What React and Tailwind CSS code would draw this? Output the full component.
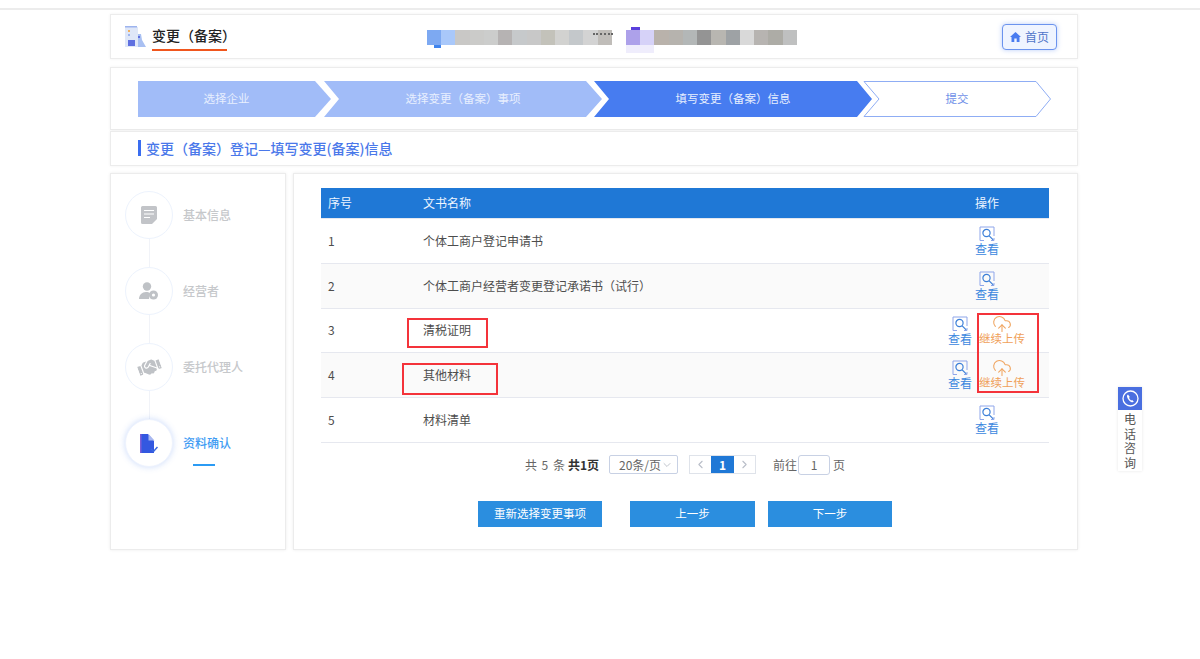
import React from "react";
import { FaHandshake } from "react-icons/fa";
import { ChevronDown, ChevronLeft, ChevronRight, CloudUpload } from "lucide-react";

const font = { fontFamily: '"Noto Sans CJK SC", "Noto Sans", sans-serif' };

const blocksA = ["bg-[#7da9f2]","bg-[#a9c8fa]","bg-[#c9c8c6]","bg-[#cbcbc9]","bg-[#cccdcc]","bg-[#b6b3b3]","bg-[#c6c9cb]","bg-[#c8c8c8]","bg-[#c3c2ba]","bg-[#d2d2d0]","bg-[#c4c8cb]","bg-[#d3d3d3]","bg-[#c0bdb9]"];
const blocksB = ["bg-[#ada1ea]","bg-[#d6d2f8]","bg-[#b9b2ab]","bg-[#b6b3ae]","bg-[#b3b7b7]","bg-[#949494]","bg-[#b8b6b1]","bg-[#9ea2a5]","bg-[#d9d9d9]","bg-[#b7b4b1]","bg-[#adaca6]","bg-[#bfc0c0]"];

function ViewIcon() {
  return (
    <svg width="16" height="16" viewBox="0 0 16 16" fill="none">
      <path d="M5 14.5H1V1h14v9" stroke="#8fa6ea" strokeWidth="1" />
      <path d="M15 12v2.5h-3" stroke="#8fa6ea" strokeWidth="1" />
      <circle cx="7.5" cy="7" r="3.6" stroke="#3c7fd8" strokeWidth="1.2" />
      <path d="M10.2 9.8l4 4" stroke="#3c7fd8" strokeWidth="1.2" />
    </svg>
  );
}

function View() {
  return (
    <div className="flex flex-col items-center w-6">
      <ViewIcon />
      <span className="text-xs leading-[14px] text-[#3b87de] whitespace-nowrap">查看</span>
    </div>
  );
}

function Upload() {
  return (
    <div className="flex flex-col items-center w-12">
      <CloudUpload size={20} strokeWidth={1.3} color="#f0a662" className="-mt-[2px]" />
      <span className="text-[11.5px] leading-[14px] text-[#f0a15a] whitespace-nowrap -mt-[3px]">继续上传</span>
    </div>
  );
}

const rows = [
  { n: 1, t: "个体工商户登记申请书" },
  { n: 2, t: "个体工商户经营者变更登记承诺书（试行）", alt: true },
  { n: 3, t: "清税证明", up: true },
  { n: 4, t: "其他材料", alt: true, up: true },
  { n: 5, t: "材料清单" },
];

function SideItem({ label, active, children, last }) {
  return (
    <div className="flex flex-col">
      <div className="flex items-center">
        <div className={`w-12 h-12 rounded-full border flex items-center justify-center bg-white ${active ? "border-[#eef3fe] shadow-[0_0_6px_rgba(90,140,240,0.3)]" : "border-[#edf3fd]"}`}>
          {children}
        </div>
        <div className="relative ml-[10px] text-xs leading-4 -mt-[1px]">
          <span className={`font-medium ${active ? "text-[#3f9cf3]" : "text-[#c6c8cb]"}`}>{label}</span>
          {active && <div className="absolute left-[10px] top-[29px] w-[22px] h-[2px] bg-[#2b9bf4]" />}
        </div>
      </div>
      {!last && <div className="w-[1px] h-[28px] bg-[#f1f3f8] ml-[24px]" />}
    </div>
  );
}

export default function App() {
  return (
    <div style={font} className="relative w-[1200px] h-[659px] bg-white overflow-hidden text-[#555]">
      <div className="h-[8px]" />
      <div className="h-[2px] bg-[#ececec]" />

      <div className="w-[968px] ml-[110px] mt-[4px] flex flex-col">
        {/* header */}
        <div className="h-[45px] bg-white border border-[#ececec] shadow-[0_0_3px_rgba(0,0,0,0.06)] flex items-center pl-[14px] pr-[20px]">
          <svg width="21" height="22" viewBox="0 0 21 22" className="shrink-0">
            <rect x="0" y="1" width="13" height="20" fill="#dfe7f8" />
            <rect x="0" y="0" width="12" height="1.5" fill="#9db4ee" />
            <rect x="3" y="4" width="2" height="2" fill="#f0b060" />
            <rect x="3" y="8" width="2" height="2" fill="#9db4ee" />
            <rect x="3" y="14" width="7" height="6" fill="#5f70e0" />
            <path d="M13 8h3l1 6 4 7H13z" fill="#a9c0f2" />
            <rect x="13" y="10" width="2" height="2" fill="#5f70e0" />
          </svg>
          <div className="ml-[6px] w-[75px] h-[28px] mt-[1px] whitespace-nowrap text-sm leading-[24px] font-medium text-[#222] border-b-2 border-[#f0561d]">变更（备案）</div>
          <div className="ml-[200px] flex items-center">
            <div className="relative flex mt-[1px]">
              {blocksA.map((c) => <div key={c} className={`w-[14.230px] h-[15px] ${c}`} />)}
              <div className="absolute left-[7px] top-[15px] w-[7px] h-[3px] bg-[#3f84ee]" />
              <div className="absolute left-[166px] top-[3px] w-[20px] h-[2px] border-t-2 border-dotted border-[#666]" />
            </div>
            <div className="relative flex mt-[1px] ml-[14px]">
              {blocksB.map((c) => <div key={c} className={`w-[14.250px] h-[15px] ${c}`} />)}
              <div className="absolute left-[0px] top-[15px] w-[28px] h-[8px] bg-[#efedfc]" />
              <div className="absolute left-[5px] -top-[3px] w-[9px] h-[3px] bg-[#5a3fdc]" />
            </div>
          </div>
          <button className="ml-auto w-[55px] h-[26px] rounded-[4px] border border-[#6b93ee] bg-[#eff4ff] shadow-[0_0_5px_rgba(80,130,240,0.4)] flex items-center justify-center gap-[4px] text-xs text-[#4f74c9]">
            <svg width="11" height="10" viewBox="0 0 11 10">
              <path d="M5.500 0L11 5H9.500v5H6.700V6.500H4.300V10H1.500V5H0z" fill="#4a7cf0" />
            </svg>
            <span>首页</span>
          </button>
        </div>

        {/* steps */}
        <div className="mt-[8px] h-[63px] bg-white border border-[#ececec] shadow-[0_0_3px_rgba(0,0,0,0.06)] pl-[27px] pt-[13px] flex items-start">
          <div className="w-[193px] h-[36px] pr-[16px] bg-[#a1bcf8] flex items-center justify-center text-[11.5px] text-[#e8effe] [clip-path:polygon(0_0,177px_0,193px_50%,177px_100%,0_100%)]">选择企业</div>
          <div className="w-[278px] h-[36px] -ml-[7px] bg-[#a1bcf8] flex items-center justify-center text-[11.5px] text-[#e8effe] [clip-path:polygon(0_0,262px_0,278px_50%,262px_100%,0_100%,15px_50%)]">选择变更（备案）事项</div>
          <div className="w-[278px] h-[36px] -ml-[8px] bg-[#477cf0] flex items-center justify-center text-[11.5px] text-[#e8effe] [clip-path:polygon(0_0,263px_0,278px_50%,263px_100%,0_100%,15px_50%)]">填写变更（备案）信息</div>
          <div className="relative w-[188px] h-[36px] -ml-[9px] flex items-center justify-center text-[11.5px] text-[#6f90e8]">
            <svg width="188" height="36" viewBox="0 0 188 36" fill="none" className="absolute inset-0">
              <path d="M1 .5H173L187.5 18 173 35.5H1L16 18Z" stroke="#8fadf4" strokeWidth="1" />
            </svg>
            <span className="relative">提交</span>
          </div>
        </div>

        {/* title */}
        <div className="mt-[1px] h-[35px] bg-white border border-[#ececec] shadow-[0_0_3px_rgba(0,0,0,0.06)] pl-[27px] pb-[2px] flex items-center">
          <div className="w-[3px] h-[16px] bg-[#3a6df0]" />
          <div className="ml-[5px] text-sm font-medium text-[#4a78ea] whitespace-nowrap">变更（备案）登记—填写变更(备案)信息</div>
        </div>

        {/* body */}
        <div className="mt-[7px] flex gap-[7px]">
          <div className="w-[176px] h-[377px] bg-white border border-[#ececec] shadow-[0_0_3px_rgba(0,0,0,0.08)] pl-[14px] pt-[17px]">
            <SideItem label="基本信息">
              <svg width="16" height="18" viewBox="0 0 16 18">
                <path d="M1.500 0h13A1.500 1.500 0 0 1 16 1.500V13l-5 5H1.500A1.500 1.500 0 0 1 0 16.500V1.500A1.500 1.500 0 0 1 1.500 0z" fill="#c2c4c8" />
                <path d="M3 4.500h10M3 8h10M3 11.500h6" stroke="#fff" strokeWidth="1.200" />
              </svg>
            </SideItem>
            <SideItem label="经营者">
              <svg width="20" height="18" viewBox="0 0 20 18">
                <circle cx="8" cy="4.500" r="4.200" fill="#bfc2c6" />
                <path d="M0 17c0-4 3-7 7-7 2 0 3 .5 4 1l-1 6z" fill="#bfc2c6" />
                <circle cx="14.500" cy="13" r="4.500" fill="#bfc2c6" />
                <circle cx="14.500" cy="13" r="1.600" fill="#fff" />
              </svg>
            </SideItem>
            <SideItem label="委托代理人">
              <FaHandshake size={23} color="#bfc2c6" className="-rotate-[20deg]" />
            </SideItem>
            <SideItem label="资料确认" active last>
              <svg width="18" height="19" viewBox="0 0 18 19">
                <path d="M0 0h8l6 7v12H0z" fill="#3358e0" />
                <path d="M8.500 0l6 6.500h-6z" fill="#a9b8f0" />
                <rect x="0" y="0" width="1.500" height="19" fill="#7d5fd8" />
                <path d="M11 15l2.500 2.500L17.500 13" stroke="#3a68e0" strokeWidth="1.500" fill="none" />
              </svg>
            </SideItem>
          </div>

          <div className="w-[785px] h-[377px] bg-white border border-[#ececec] shadow-[0_0_3px_rgba(0,0,0,0.08)] pt-[14px] pl-[27px]">
            <div className="w-[728px]">
              <div className="h-[31px] bg-[#1f78d6] flex items-center text-xs text-[#eef5ff] border-b border-[#e4e8f0]">
                <div className="w-[102px] pl-[7px]">序号</div>
                <div className="w-[502px]">文书名称</div>
                <div className="w-[124px] text-center">操作</div>
              </div>
              {rows.map((r) => (
                <div key={r.n} className={`h-[44.800px] flex border-b border-[#e6e8ef] text-xs text-[#4d4d4d] ${r.alt ? "bg-[#fafafa]" : "bg-white"}`}>
                  <div className="w-[102px] pl-[7px] flex items-center">{r.n}</div>
                  <div className="w-[502px] flex items-center">{r.t}</div>
                  <div className="w-[124px] flex justify-center gap-[6px] pt-[7px]">
                    <View />
                    {r.up && <Upload />}
                  </div>
                </div>
              ))}
            </div>

            <div className="w-[728px] mt-[12px] h-[20px] flex items-center justify-center text-xs text-[#666]">
              <span className="[word-spacing:2px]">共 5 条</span>
              <span className="ml-[3px] font-bold text-[#333]">共1页</span>
              <div className="ml-[10px] w-[69px] h-[19px] border border-[#c8d1e4] rounded-[2px] flex items-center pl-[9px] pr-[4px] justify-between whitespace-nowrap">
                <span>20条/页</span>
                <ChevronDown size={12} color="#c0c4cc" />
              </div>
              <div className="ml-[11px] flex h-[19px] border border-[#dfe3ea]">
                <div className="w-[21px] flex items-center justify-center"><ChevronLeft size={13} color="#b9bec8" /></div>
                <div className="w-[23px] bg-[#1f78d6] text-white font-bold flex items-center justify-center">1</div>
                <div className="w-[21px] flex items-center justify-center"><ChevronRight size={13} color="#b9bec8" /></div>
              </div>
              <span className="ml-[17px]">前往</span>
              <div className="ml-[1px] w-[32px] h-[20px] border border-[#c8d1e4] rounded-[3px] flex items-center justify-center">1</div>
              <span className="ml-[3px]">页</span>
            </div>

            <div className="w-[728px] mt-[26px] flex justify-center text-[11.5px] text-white">
              <button className="w-[124px] h-[26px] bg-[#2b8edf]">重新选择变更事项</button>
              <button className="ml-[28px] w-[125px] h-[26px] bg-[#2b8edf]">上一步</button>
              <button className="ml-[13px] w-[124px] h-[26px] bg-[#2b8edf]">下一步</button>
            </div>
          </div>
        </div>
      </div>

      {/* annotations */}
      <div className="absolute left-[407px] top-[318px] w-[81px] h-[30px] border-[2.500px] border-[#f4333a]" />
      <div className="absolute left-[402px] top-[363px] w-[96px] h-[32px] border-[2.500px] border-[#f4333a]" />
      <div className="absolute left-[977px] top-[313px] w-[62px] h-[80px] border-[2.500px] border-[#f4333a]" />

      {/* phone widget */}
      <div className="absolute left-[1118px] top-[387px] w-[24px] h-[84px] bg-white shadow-[0_0_3px_rgba(0,0,0,0.1)] flex flex-col items-center">
        <div className="w-[24px] h-[23px] bg-[#4a6fe0] flex items-center justify-center">
          <svg width="17" height="17" viewBox="0 0 17 17" fill="none">
            <circle cx="8.500" cy="8.500" r="7.500" stroke="#fff" strokeWidth="1.300" />
            <path d="M6 4.500c-1 .5-1.200 1.500-.8 2.800.6 2 2.300 4 4 4.800 1.200.5 2.200.2 2.600-.6l-1.700-1.600-1 .5c-1-.6-1.700-1.500-2.100-2.600l.8-.8z" fill="#fff" />
          </svg>
        </div>
        <div className="mt-[2px] w-[12px] text-xs leading-[14.500px] text-[#555] break-all">电话咨询</div>
      </div>
    </div>
  );
}
